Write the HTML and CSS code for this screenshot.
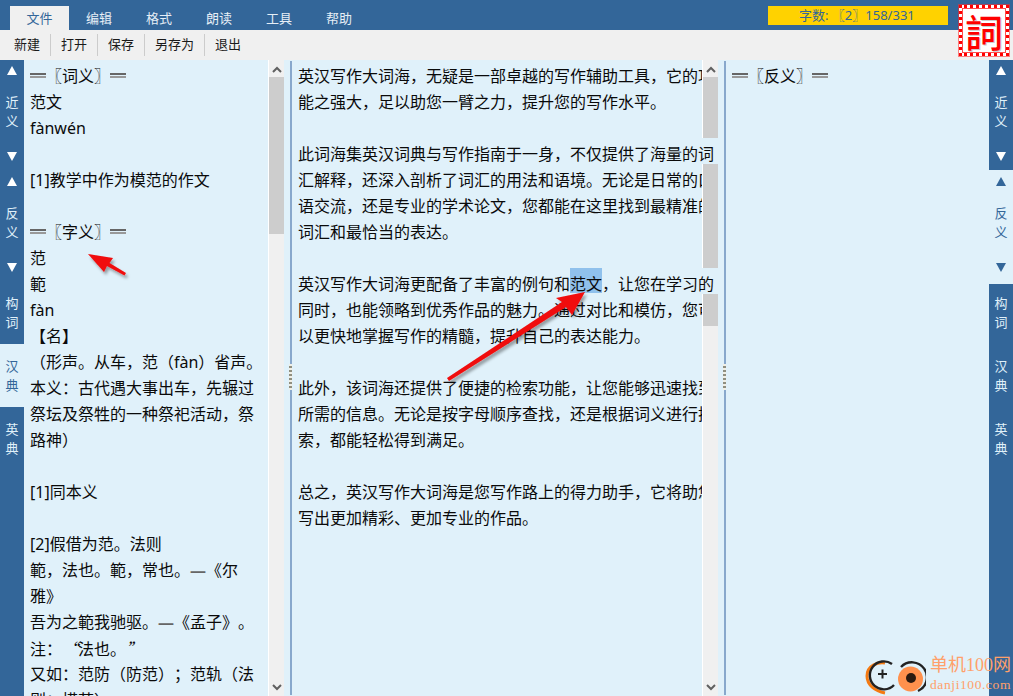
FILE: index.html
```html
<!DOCTYPE html>
<html lang="zh">
<head>
<meta charset="utf-8">
<title>英汉写作大词海</title>
<link rel="stylesheet" href="styles.css">
</head>
<body>
<div class="app">
  <header class="topbar">
    <nav class="menu">
      <span class="menu-item active">文件</span>
      <span class="menu-item">编辑</span>
      <span class="menu-item">格式</span>
      <span class="menu-item">朗读</span>
      <span class="menu-item">工具</span>
      <span class="menu-item">帮助</span>
    </nav>
    <div class="counter">字数: 〖2〗158/331</div>
  </header>
  <div class="toolbar">
    <span class="tool">新建</span>
    <span class="tool">打开</span>
    <span class="tool">保存</span>
    <span class="tool">另存为</span>
    <span class="tool last">退出</span>
  </div>
  <main class="main">
    <aside class="side">
      <div class="tab tall"><i class="up"></i><b>近<br>义</b><i class="down"></i></div>
      <div class="tab tall"><i class="up"></i><b>反<br>义</b><i class="down"></i></div>
      <div class="tab short"><b>构<br>词</b></div>
      <div class="tab short on"><b>汉<br>典</b></div>
      <div class="tab short"><b>英<br>典</b></div>
      <div class="tab fill"></div>
    </aside>
    <section class="panel left">
      <p class="line"><span class="rule"></span>〖词义〗<span class="rule"></span></p>
      <p class="line">范文</p>
      <p class="line">fànwén</p>
      <p class="line">&nbsp;</p>
      <p class="line">[1]教学中作为模范的作文</p>
      <p class="line">&nbsp;</p>
      <p class="line"><span class="rule"></span>〖字义〗<span class="rule"></span></p>
      <p class="line">范</p>
      <p class="line">範</p>
      <p class="line">fàn</p>
      <p class="line">【名】</p>
      <p class="line">（形声。从车，范（fàn）省声。</p>
      <p class="line">本义：古代遇大事出车，先辗过</p>
      <p class="line">祭坛及祭牲的一种祭祀活动，祭</p>
      <p class="line">路神）</p>
      <p class="line">&nbsp;</p>
      <p class="line">[1]同本义</p>
      <p class="line">&nbsp;</p>
      <p class="line">[2]假借为范。法则</p>
      <p class="line">範，法也。範，常也。<span class="dash">—</span>《尔</p>
      <p class="line">雅》</p>
      <p class="line">吾为之範我驰驱。<span class="dash">—</span>《孟子》。</p>
      <p class="line">注：<span class="cjk">“</span>法也。<span class="cjk">”</span></p>
      <p class="line">又如：范防（防范）；范轨（法</p>
      <p class="line">则；模范）</p>
    </section>
    <div class="scroll">
      <div class="seg grow">
        <span class="chev"><svg width="10" height="7" viewBox="0 0 10 7"><path d="M1 6 L5 2 L9 6" fill="none" stroke="#606060" stroke-width="2"/></svg></span>
        <div class="thumb t-left"></div>
        <span class="chev dn"><svg width="10" height="7" viewBox="0 0 10 7"><path d="M1 1 L5 5 L9 1" fill="none" stroke="#606060" stroke-width="2"/></svg></span>
      </div>
    </div>
    <div class="divider"><span class="grip"></span></div>
    <section class="panel center">
      <p class="line">英汉写作大词海，无疑是一部卓越的写作辅助工具，它的功</p>
      <p class="line">能之强大，足以助您一臂之力，提升您的写作水平。</p>
      <p class="line">&nbsp;</p>
      <p class="line">此词海集英汉词典与写作指南于一身，不仅提供了海量的词</p>
      <p class="line">汇解释，还深入剖析了词汇的用法和语境。无论是日常的口</p>
      <p class="line">语交流，还是专业的学术论文，您都能在这里找到最精准的</p>
      <p class="line">词汇和最恰当的表达。</p>
      <p class="line">&nbsp;</p>
      <p class="line">英汉写作大词海更配备了丰富的例句和<span class="sel">范文</span>，让您在学习的</p>
      <p class="line">同时，也能领略到优秀作品的魅力。通过对比和模仿，您可</p>
      <p class="line">以更快地掌握写作的精髓，提升自己的表达能力。</p>
      <p class="line">&nbsp;</p>
      <p class="line">此外，该词海还提供了便捷的检索功能，让您能够迅速找到</p>
      <p class="line">所需的信息。无论是按字母顺序查找，还是根据词义进行搜</p>
      <p class="line">索，都能轻松得到满足。</p>
      <p class="line">&nbsp;</p>
      <p class="line">总之，英汉写作大词海是您写作路上的得力助手，它将助您</p>
      <p class="line">写出更加精彩、更加专业的作品。</p>
    </section>
    <div class="scroll mid">
      <div class="seg s1"><span class="chev"><svg width="10" height="7" viewBox="0 0 10 7"><path d="M1 6 L5 2 L9 6" fill="none" stroke="#606060" stroke-width="2"/></svg></span><div class="thumb t1"></div></div>
      <div class="gap g1"></div>
      <div class="seg s2"><div class="thumb t2"></div></div>
      <div class="gap g2"></div>
      <div class="seg grow s3"><div class="thumb t3"></div><span class="chev dn"><svg width="10" height="7" viewBox="0 0 10 7"><path d="M1 1 L5 5 L9 1" fill="none" stroke="#606060" stroke-width="2"/></svg></span></div>
    </div>
    <div class="divider"><span class="grip"></span></div>
    <section class="panel right">
      <p class="line"><span class="rule"></span>〖反义〗<span class="rule"></span></p>
    </section>
    <aside class="side">
      <div class="tab tall"><i class="up"></i><b>近<br>义</b><i class="down"></i></div>
      <div class="tab tall on"><i class="up"></i><b>反<br>义</b><i class="down"></i></div>
      <div class="tab short"><b>构<br>词</b></div>
      <div class="tab short"><b>汉<br>典</b></div>
      <div class="tab short"><b>英<br>典</b></div>
      <div class="tab fill"></div>
    </aside>
  </main>

  <div class="seal"><span class="seal-char">詞</span></div>

  <svg class="arrows" width="1013" height="696" viewBox="0 0 1013 696" aria-hidden="true">
    <defs>
      <filter id="sh" x="-20%" y="-20%" width="150%" height="150%">
        <feDropShadow dx="2" dy="3" stdDeviation="1.6" flood-color="#000" flood-opacity=".35"/>
      </filter>
    </defs>
    <g filter="url(#sh)" fill="#f00a0a">
      <path d="M88 254 L113 258 L109.5 263 L126 273 L124.5 275.5 L107 266 L104 272 Z"/>
      <path d="M585 292 L572 315 L566 307 L449 381 L447 378 L562 302 L556 298 Z"/>
    </g>
  </svg>

  <div class="mark">
    <svg class="mark-logo" width="62" height="44" viewBox="0 0 62 44" aria-hidden="true">
      <path d="M21 11 C14 10 3 13 3 24 C3 33 11 39 21 41" fill="none" stroke="#f47a12" stroke-width="3"/>
      <path d="M28 12 A14 14 0 1 0 30 33" fill="none" stroke="#222" stroke-width="2.400"/>
      <path d="M14 22h9M18.500 17.500v9" stroke="#222" stroke-width="2"/>
      <path d="M37 15 A15 15 0 1 1 54 39" fill="none" stroke="#222" stroke-width="2.400"/>
      <circle cx="46.500" cy="27" r="12.500" fill="#ff914d"/>
      <circle cx="47" cy="26" r="5" fill="#2a1a10"/>
    </svg>
    <div class="mark-text">
      <span class="mark-cn">单机100网</span>
      <span class="mark-en">danji100.com</span>
    </div>
  </div>
</div>
</body>
</html>
```
FILE: styles.css
```css
* { box-sizing: border-box; }
html, body { margin: 0; padding: 0; height: 100%; overflow: hidden; }
body { font-family: "Noto Sans", "Noto Sans CJK SC", sans-serif; color: #0a0a0a; text-spacing-trim: space-all; }
.app { position: relative; width: 1013px; height: 696px; display: flex; flex-direction: column; overflow: hidden; background: #e0f1fa; }

.topbar { height: 30px; flex: none; background: #336699; display: flex; align-items: flex-start; }
.menu { display: flex; padding: 6px 0 0 10px; width: 768px; height: 30px; }
.menu-item { width: 60px; height: 24px; line-height: 25px; font-size: 13px; text-align: center; color: #e6eef6; }
.menu-item.active { width: 59px; background: #f0f0f0; color: #336699; }
.counter { margin-top: 6px; width: 180px; height: 19px; line-height: 18px; padding-left: 31px; background: #ffd200; color: #336699; font-size: 13px; white-space: nowrap; }

.toolbar { height: 30px; flex: none; background: #f0f0f0; display: flex; align-items: center; padding-left: 4px; }
.tool { height: 22px; line-height: 20px; padding: 0 10px; font-size: 13px; border-right: 1px solid #ccc; color: #1a1a1a; }
.tool.last { border-right: 0; }

.main { flex: 1; min-height: 0; display: flex; }

.side { width: 24px; flex: none; display: flex; flex-direction: column; background: #336699; }
.tab { background: #336699; color: #e0f1fa; display: flex; flex-direction: column; align-items: center; font-size: 13px; }
.tab b { font-weight: 400; line-height: 19px; display: block; text-align: center; }
.tab.tall { height: 110px; padding-top: 6px; }
.tab.tall:nth-child(2) { height: 114px; padding-top: 7px; }
.tab.tall b { margin-top: 18px; }
.tab.tall i.down { margin-top: 21px; }
.tab.short { height: 60px; padding-top: 10px; }
.tab.short:nth-child(4) { height: 63px; padding-top: 13px; }
.tab.short:nth-child(5) { padding-top: 13px; }
.tab.fill { flex: 1; }
.tab.on { background: #e0f1fa; color: #336699; }
.up { width: 0; height: 0; border: 5.500px solid transparent; border-top: 0; border-bottom: 9px solid currentColor; }
.down { width: 0; height: 0; border: 5.500px solid transparent; border-bottom: 0; border-top: 9px solid currentColor; }
.tab .up, .tab .down { color: #fff; }
.tab.on .up, .tab.on .down { color: #336699; }

.panel { background: #e0f1fa; padding: 3px 0 0 6px; overflow: visible; }
.panel.left { width: 244px; flex: none; overflow: hidden; }
.panel.center { width: 410px; flex: none; }
.panel.right { flex: 1; }
.line { margin: 0; font-size: 16px; line-height: 26px; height: 26px; white-space: nowrap; }
.rule { display: inline-block; width: 16px; height: 5px; vertical-align: 4px; border-top: 2px solid #666; border-bottom: 2px solid #999; }
.dash { color: #666; font-weight: 700; }
.cjk { font-family: "Noto Sans CJK SC", sans-serif; font-style: italic; }
.sel { display: inline-block; height: 22px; vertical-align: top; background: #90c1ec; box-shadow: 0 -3px 0 #90c1ec; }

.scroll { position: relative; width: 22px; flex: none; display: flex; flex-direction: column; padding-right: 6px; }
.seg { background: #f0f0f0; border-left: 1px solid #fff; display: flex; flex-direction: column; align-items: stretch; }
.seg.grow { flex: 1; }
.thumb { background: #cdcdcd; flex: none; }
.t-left { height: 157px; }
.chev { display: flex; align-items: center; justify-content: center; height: 17px; flex: none; padding-top: 1px; }
.chev.dn { margin-top: auto; padding-top: 0; }
.s1 { height: 78px; flex: none; }
.t1 { height: 61px; }
.g1 { height: 26px; flex: none; }
.s2 { height: 104px; flex: none; }
.t2 { height: 104px; }
.g2 { height: 26px; flex: none; }
.t3 { height: 32px; }

.divider { position: relative; width: 8px; flex: none; padding: 1px 0; margin-left: -6px; }
.divider::before { content: ""; display: block; width: 2px; height: 100%; margin-left: 6px; background: #88a8cc; }
.grip { position: absolute; left: 5px; top: 304px; width: 3px; height: 26px; background: repeating-linear-gradient(#f0efe6 0 2px, #8f8f80 2px 4px); }

.seal { position: absolute; left: 959px; top: 5px; width: 50px; height: 51px; background: #fff; border: 3px dotted #f00; box-shadow: 0 0 0 1px rgba(255, 40, 40, .55), inset 0 0 0 1px rgba(255, 0, 0, .7); display: flex; align-items: center; justify-content: center; }
.seal-char { color: #f00; font-size: 38px; line-height: 44px; font-family: "Noto Sans CJK TC", sans-serif; font-weight: 500; text-shadow: 1px 1px 0 #ccc; }

.arrows { position: absolute; left: 0; top: 0; pointer-events: none; }

.mark { position: absolute; left: 864px; top: 652px; display: flex; align-items: flex-start; }
.mark-text { display: flex; flex-direction: column; margin-left: 4px; color: #ffa06a; white-space: nowrap; }
.mark-cn { font: 400 18px/21px "Liberation Serif", "Noto Sans CJK SC", serif; margin-top: 3px; }
.mark-en { font: 400 13.500px/17px "Liberation Serif", serif; letter-spacing: .6px; }
```
